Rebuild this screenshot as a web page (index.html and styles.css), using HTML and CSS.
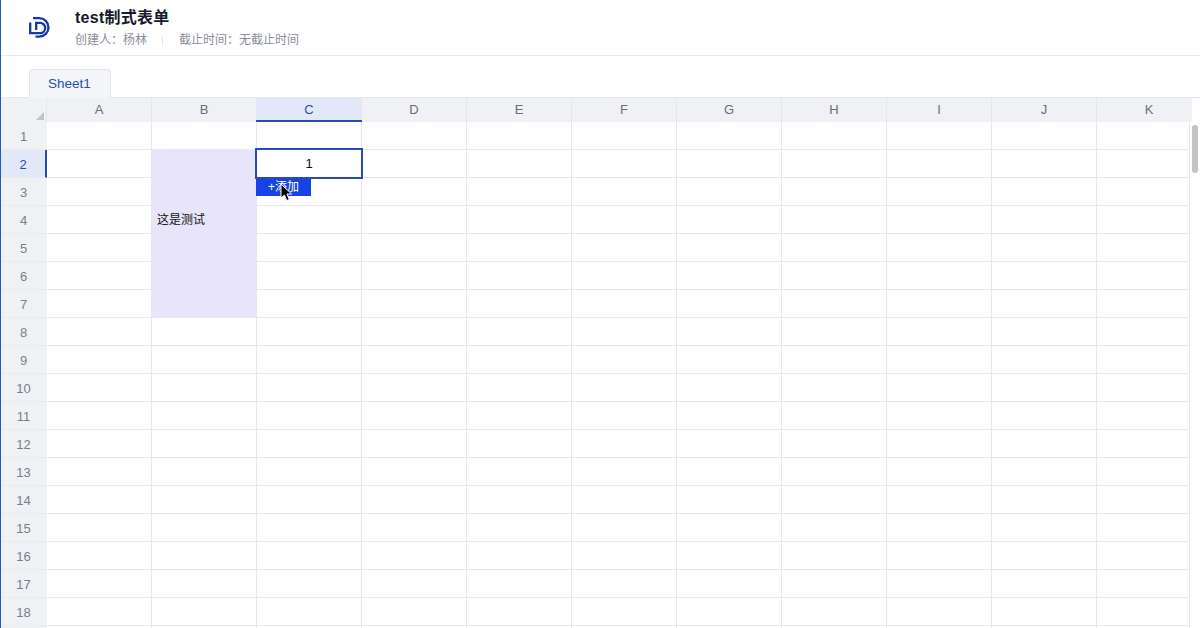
FILE: index.html
```html
<!DOCTYPE html>
<html lang="zh-CN">
<head>
<meta charset="utf-8">
<title>test制式表单</title>
<link rel="stylesheet" href="styles.css">
</head>
<body>
<div class="app">
  <header class="top">
    <svg class="logo" viewBox="0 0 21 21" width="21" height="21" fill="none" stroke="#1636ab" stroke-width="2.3">
      <path d="M4 1.2h6.3a9.2 9.2 0 0 1 0 18.4H6.5"/>
      <path d="M1.2 5.5V16.2H11a5.2 5.2 0 0 0 0-10.4H7.2V13"/>
    </svg>
    <div class="info">
      <h1 class="title">test制式表单</h1>
      <div class="meta"><span>创建人：杨林</span><i class="sep"></i><span>截止时间：无截止时间</span></div>
    </div>
  </header>
  <nav class="tabs"><div class="tab">Sheet1</div></nav>
  <section class="sheet">
    <div class="colhead">
      <div class="corner"><i class="tri"></i></div>
      <div class="ch">A</div><div class="ch">B</div><div class="ch on">C</div><div class="ch">D</div><div class="ch">E</div><div class="ch">F</div><div class="ch">G</div><div class="ch">H</div><div class="ch">I</div><div class="ch">J</div><div class="ch">K</div>
    </div>
    <div class="body">
      <div class="rh">1</div><div class="c"></div><div class="c"></div><div class="c"></div><div class="c"></div><div class="c"></div><div class="c"></div><div class="c"></div><div class="c"></div><div class="c"></div><div class="c"></div><div class="c"></div>
      <div class="rh on">2</div><div class="c"></div><div class="c merged">这是测试</div><div class="c val">1</div><div class="c"></div><div class="c"></div><div class="c"></div><div class="c"></div><div class="c"></div><div class="c"></div><div class="c"></div><div class="c"></div>
      <div class="rh">3</div><div class="c"></div><div class="c"></div><div class="c"></div><div class="c"></div><div class="c"></div><div class="c"></div><div class="c"></div><div class="c"></div><div class="c"></div><div class="c"></div>
      <div class="rh">4</div><div class="c"></div><div class="c"></div><div class="c"></div><div class="c"></div><div class="c"></div><div class="c"></div><div class="c"></div><div class="c"></div><div class="c"></div><div class="c"></div>
      <div class="rh">5</div><div class="c"></div><div class="c"></div><div class="c"></div><div class="c"></div><div class="c"></div><div class="c"></div><div class="c"></div><div class="c"></div><div class="c"></div><div class="c"></div>
      <div class="rh">6</div><div class="c"></div><div class="c"></div><div class="c"></div><div class="c"></div><div class="c"></div><div class="c"></div><div class="c"></div><div class="c"></div><div class="c"></div><div class="c"></div>
      <div class="rh">7</div><div class="c"></div><div class="c"></div><div class="c"></div><div class="c"></div><div class="c"></div><div class="c"></div><div class="c"></div><div class="c"></div><div class="c"></div><div class="c"></div>
      <div class="rh">8</div><div class="c"></div><div class="c"></div><div class="c"></div><div class="c"></div><div class="c"></div><div class="c"></div><div class="c"></div><div class="c"></div><div class="c"></div><div class="c"></div><div class="c"></div>
      <div class="rh">9</div><div class="c"></div><div class="c"></div><div class="c"></div><div class="c"></div><div class="c"></div><div class="c"></div><div class="c"></div><div class="c"></div><div class="c"></div><div class="c"></div><div class="c"></div>
      <div class="rh">10</div><div class="c"></div><div class="c"></div><div class="c"></div><div class="c"></div><div class="c"></div><div class="c"></div><div class="c"></div><div class="c"></div><div class="c"></div><div class="c"></div><div class="c"></div>
      <div class="rh">11</div><div class="c"></div><div class="c"></div><div class="c"></div><div class="c"></div><div class="c"></div><div class="c"></div><div class="c"></div><div class="c"></div><div class="c"></div><div class="c"></div><div class="c"></div>
      <div class="rh">12</div><div class="c"></div><div class="c"></div><div class="c"></div><div class="c"></div><div class="c"></div><div class="c"></div><div class="c"></div><div class="c"></div><div class="c"></div><div class="c"></div><div class="c"></div>
      <div class="rh">13</div><div class="c"></div><div class="c"></div><div class="c"></div><div class="c"></div><div class="c"></div><div class="c"></div><div class="c"></div><div class="c"></div><div class="c"></div><div class="c"></div><div class="c"></div>
      <div class="rh">14</div><div class="c"></div><div class="c"></div><div class="c"></div><div class="c"></div><div class="c"></div><div class="c"></div><div class="c"></div><div class="c"></div><div class="c"></div><div class="c"></div><div class="c"></div>
      <div class="rh">15</div><div class="c"></div><div class="c"></div><div class="c"></div><div class="c"></div><div class="c"></div><div class="c"></div><div class="c"></div><div class="c"></div><div class="c"></div><div class="c"></div><div class="c"></div>
      <div class="rh">16</div><div class="c"></div><div class="c"></div><div class="c"></div><div class="c"></div><div class="c"></div><div class="c"></div><div class="c"></div><div class="c"></div><div class="c"></div><div class="c"></div><div class="c"></div>
      <div class="rh">17</div><div class="c"></div><div class="c"></div><div class="c"></div><div class="c"></div><div class="c"></div><div class="c"></div><div class="c"></div><div class="c"></div><div class="c"></div><div class="c"></div><div class="c"></div>
      <div class="rh">18</div><div class="c"></div><div class="c"></div><div class="c"></div><div class="c"></div><div class="c"></div><div class="c"></div><div class="c"></div><div class="c"></div><div class="c"></div><div class="c"></div><div class="c"></div>
      <div class="rh"></div><div class="c"></div><div class="c"></div><div class="c"></div><div class="c"></div><div class="c"></div><div class="c"></div><div class="c"></div><div class="c"></div><div class="c"></div><div class="c"></div><div class="c"></div>
    </div>
    <div class="selection"></div>
    <div class="add">+添加</div>
    <svg class="cursor" viewBox="0 0 14 20" width="14" height="20">
      <path d="M1 1v14l3.4-3 2.3 5.6 2.6-1.1L7 11h4.6z" fill="#000" stroke="#fff" stroke-width="1"/>
    </svg>
    <div class="thumb"></div>
  </section>
</div>
</body>
</html>
```
FILE: styles.css
```css
* { box-sizing: border-box; }
html, body { margin: 0; height: 100%; overflow: hidden; background: #fff; }
body { font-family: "Liberation Sans", "Noto Sans CJK SC", sans-serif; color: #000; }
.app { height: 628px; border-left: 1px solid #1a5fb8; overflow: hidden; display: flex; flex-direction: column; }

.top { height: 56px; flex: none; border-bottom: 1px solid #e6e8ec; display: flex; align-items: flex-start; padding-left: 28px; }
.logo { margin-top: 17px; flex: none; }
.info { margin-left: 25px; padding-top: 7px; }
.title { margin: 0; font-size: 16px; line-height: 22px; font-weight: 700; letter-spacing: 0.25px; color: #15192b; }
.meta { margin-top: 3px; display: flex; align-items: center; font-size: 12px; line-height: 17px; color: #8a8e99; }
.sep { width: 1px; height: 10px; background: #e1e3e8; margin: 0 16px 0 15px; }

.tabs { height: 42px; flex: none; padding: 13px 0 0 28px; border-bottom: 1px solid #e4e6ea; }
.tab { width: 82px; height: 29px; background: #f3f5f9; border: 1px solid #e2e5ea; border-bottom: 0; border-radius: 4px 4px 0 0; font-size: 13.5px; line-height: 27px; padding-left: 18px; color: #2b4ea8; }

.sheet { position: relative; flex: 1; min-height: 0; }
.colhead { display: grid; grid-template-columns: 46px repeat(10, 105px) 105px; grid-template-rows: 24px; width: 1191px; height: 24px; overflow: hidden; }
.corner { position: relative; background: #f0f1f4; border-right: 1px solid #e6e7ea; }
.tri { position: absolute; right: 2px; bottom: 2px; width: 8px; height: 8px; background: #c0c3ca; clip-path: polygon(100% 0, 100% 100%, 0 100%); }
.ch { background: #f0f1f4; border-right: 1px solid #e6e7ea; font-size: 13px; line-height: 24px; text-align: center; color: #696d7c; }
.ch.on { margin-left: -1px; background: #e3e8f8; color: #2b4ea8; border-right: 0; border-bottom: 2px solid #2b4ab0; }

.body { display: grid; grid-template-columns: 46px repeat(10, 105px) 93px; grid-auto-rows: 28px; }
.rh { background: #f0f1f4; font-size: 13px; line-height: 29px; text-align: center; padding-right: 1px; color: #7a7e8a; border-bottom: 1px solid #e9eaed; }
.rh.on { background: #e3e8f8; color: #2b4ea8; border-right: 2px solid #2b4ab0; padding-right: 0; }
.c { border-right: 1px solid #e8e8e8; border-bottom: 1px solid #e8e8e8; font-size: 12px; }
.merged { grid-row: span 6; background: #e8e4f9; border: 0; display: flex; align-items: center; padding: 0 0 32px 5px; color: #111; }
.val { text-align: center; font-size: 13px; line-height: 27px; color: #111; }

.selection { position: absolute; left: 254px; top: 50px; width: 108px; height: 31px; border: 2px solid #2b4ab0; pointer-events: none; }
.add { position: absolute; left: 255px; top: 81px; width: 55px; height: 17px; background: #1642e6; color: #fff; font-size: 12px; line-height: 17px; text-align: center; }
.cursor { position: absolute; left: 279px; top: 85px; }
.thumb { position: absolute; left: 1191px; top: 27px; width: 6px; height: 48px; border-radius: 3px; background: #c4c4c4; }
```
